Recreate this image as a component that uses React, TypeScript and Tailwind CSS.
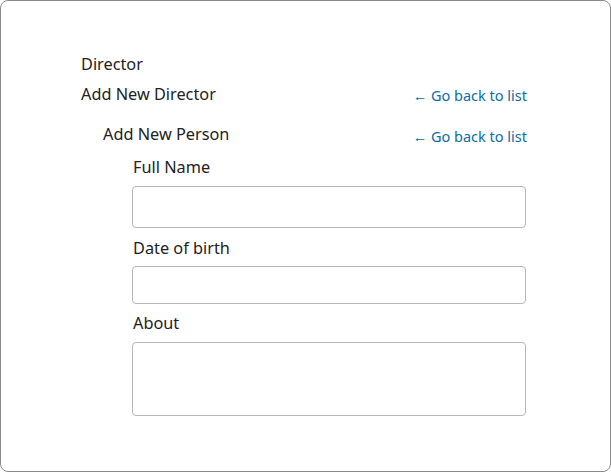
import React from 'react';

const font = { fontFamily: '"Noto Sans", "Open Sans", sans-serif' };

const GoBack: React.FC<{ className?: string }> = ({ className = '' }) => (
  <a href="#" className={`text-[14.5px] leading-5 text-[#0b6ea5] ${className}`}>
    ← Go back to list
  </a>
);

export default function App() {
  return (
    <div style={font} className="w-[611px] h-[472px] bg-white border border-[#8a8a8a] rounded-lg text-[#222] text-[16.3px] leading-5">
      <div className="pl-[80px] pr-[83px] pt-[53px]">
        <div>Director</div>

        <div className="mt-[9px] flex items-center justify-between">
          <span>Add New Director</span>
          <GoBack className="mt-[2px]" />
        </div>

        <div className="pl-[22px] mt-[17px]">
          <div className="flex items-center justify-between">
            <span>Add New Person</span>
            <GoBack className="mt-[4px]" />
          </div>

          <form className="pl-[29px] pr-px mt-[11px]">
            <label className="block pl-px">Full Name</label>
            <input type="text" className="block w-full h-[42px] mt-[9px] border border-[#b3b6bb] rounded-[4px] px-2" />

            <label className="block pl-px mt-[10px]">Date of birth</label>
            <input type="text" className="block w-full h-[38px] mt-[8px] border border-[#b3b6bb] rounded-[4px] px-2" />

            <label className="block pl-px mt-[9px]">About</label>
            <textarea className="block w-full h-[74px] mt-[9px] border border-[#b3b6bb] rounded-[4px] px-2 resize-none" />
          </form>
        </div>
      </div>
    </div>
  );
}
